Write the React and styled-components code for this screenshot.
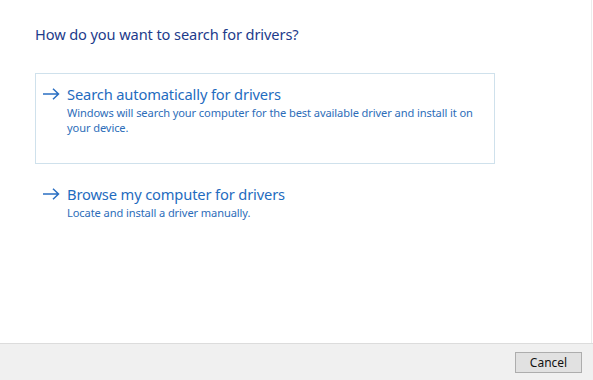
import React from "react";
import styled, { createGlobalStyle } from "styled-components";

const Global = createGlobalStyle`
  html, body { margin: 0; padding: 0; background: #ffffff; }
  body { font-family: "Noto Sans", "Open Sans", sans-serif; }
  * { box-sizing: border-box; }
`;

const Window = styled.div`
  width: 593px;
  height: 380px;
  display: flex;
  flex-direction: column;
  background: #ffffff;
  overflow: hidden;
`;

const Content = styled.div`
  flex: 1;
  padding: 24px 0 0 35px;
  margin-right: 1px;
  border-right: 1px solid #ececec;
`;

const Title = styled.h1`
  margin: 0;
  font-size: 14.6px;
  font-weight: 400;
  line-height: 20px;
  color: #1d3b8b;
  letter-spacing: -0.1px;
`;

const Options = styled.div`
  margin-top: 29px;
  display: flex;
  flex-direction: column;
  gap: 9px;
`;

const Option = styled.button`
  width: 460px;
  min-height: 91px;
  display: grid;
  grid-template-columns: 25px 1fr;
  align-content: start;
  padding: 9px 0 0 6px;
  border: 1px solid ${(p) => (p.$active ? "#cfe1ec" : "transparent")};
  background: #ffffff;
  text-align: left;
  font-family: inherit;
  cursor: pointer;
`;

const ArrowCell = styled.span`
  height: 22px;
  display: flex;
  align-items: center;
  color: #2a6fc2;
`;

const OptionTitle = styled.div`
  font-size: 14.7px;
  line-height: 22px;
  color: #1f6cc0;
  letter-spacing: -0.15px;
`;

const OptionDesc = styled.div`
  grid-column: 2;
  width: 425px;
  font-size: 11.1px;
  line-height: 15px;
  color: #2d6db9;
  letter-spacing: -0.1px;
`;

const Footer = styled.div`
  height: 37px;
  border-top: 1px solid #dcdcdc;
  background: #f0f0f0;
  display: flex;
  justify-content: flex-end;
  align-items: flex-start;
  padding: 8px 11px 0 0;
`;

const Button = styled.button`
  width: 67px;
  height: 21px;
  border: 1px solid #adadad;
  background: #e1e1e1;
  font-family: "Noto Sans", sans-serif;
  font-size: 12px;
  color: #111;
  padding: 0;
  line-height: 18px;
`;

const Arrow = () => (
  <svg width="18" height="12" viewBox="0 0 18 12" fill="none">
    <path d="M1 6H16.5M11 0.8L16.5 6L11 11.2" stroke="currentColor" strokeWidth="1.5" />
  </svg>
);

export default function App() {
  return (
    <>
      <Global />
      <Window>
        <Content>
          <Title>How do you want to search for drivers?</Title>
          <Options>
            <Option $active>
              <ArrowCell><Arrow /></ArrowCell>
              <OptionTitle>Search automatically for drivers</OptionTitle>
              <OptionDesc>
                Windows will search your computer for the best available driver and install it on your device.
              </OptionDesc>
            </Option>
            <Option>
              <ArrowCell><Arrow /></ArrowCell>
              <OptionTitle>Browse my computer for drivers</OptionTitle>
              <OptionDesc>Locate and install a driver manually.</OptionDesc>
            </Option>
          </Options>
        </Content>
        <Footer>
          <Button>Cancel</Button>
        </Footer>
      </Window>
    </>
  );
}
